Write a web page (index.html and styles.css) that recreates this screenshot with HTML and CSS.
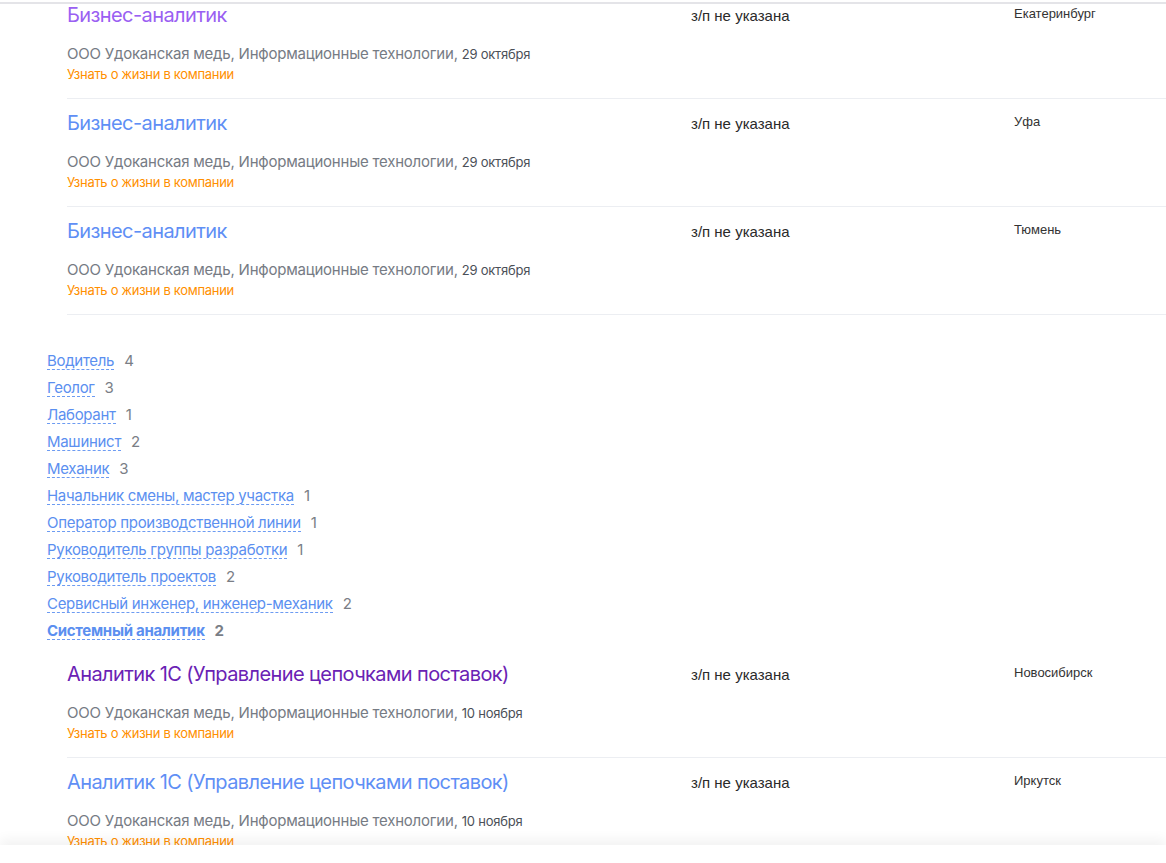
FILE: index.html
```html
<!DOCTYPE html>
<html lang="ru">
<head>
    <meta charset="UTF-8">
    <meta name="viewport" content="width=device-width, initial-scale=1.0">
    <title>Вакансии — ООО Удоканская медь</title>
    <link rel="stylesheet" href="styles.css">
</head>
<body>
    <div class="top-line"></div>

    <main class="page">
        <!-- Бизнес-аналитик -->
        <div class="vacancy-group">
            <div class="vacancy">
                <div class="vacancy-main">
                    <a href="#" class="vacancy-title visited">Бизнес-аналитик</a>
                    <div class="vacancy-company">ООО Удоканская медь, Информационные технологии, <span class="vacancy-date">29 октября</span></div>
                    <a href="#" class="vacancy-life">Узнать о жизни в компании</a>
                </div>
                <div class="vacancy-salary">з/п не указана</div>
                <div class="vacancy-city">Екатеринбург</div>
            </div>
            <div class="vacancy">
                <div class="vacancy-main">
                    <a href="#" class="vacancy-title">Бизнес-аналитик</a>
                    <div class="vacancy-company">ООО Удоканская медь, Информационные технологии, <span class="vacancy-date">29 октября</span></div>
                    <a href="#" class="vacancy-life">Узнать о жизни в компании</a>
                </div>
                <div class="vacancy-salary">з/п не указана</div>
                <div class="vacancy-city">Уфа</div>
            </div>
            <div class="vacancy">
                <div class="vacancy-main">
                    <a href="#" class="vacancy-title">Бизнес-аналитик</a>
                    <div class="vacancy-company">ООО Удоканская медь, Информационные технологии, <span class="vacancy-date">29 октября</span></div>
                    <a href="#" class="vacancy-life">Узнать о жизни в компании</a>
                </div>
                <div class="vacancy-salary">з/п не указана</div>
                <div class="vacancy-city">Тюмень</div>
            </div>
        </div>

        <!-- Профессии -->
        <ul class="professions">
            <li><a href="#" class="prof-link">Водитель</a><span class="prof-count">4</span></li>
            <li><a href="#" class="prof-link">Геолог</a><span class="prof-count">3</span></li>
            <li><a href="#" class="prof-link">Лаборант</a><span class="prof-count">1</span></li>
            <li><a href="#" class="prof-link">Машинист</a><span class="prof-count">2</span></li>
            <li><a href="#" class="prof-link">Механик</a><span class="prof-count">3</span></li>
            <li><a href="#" class="prof-link">Начальник смены, мастер участка</a><span class="prof-count">1</span></li>
            <li><a href="#" class="prof-link">Оператор производственной линии</a><span class="prof-count">1</span></li>
            <li><a href="#" class="prof-link">Руководитель группы разработки</a><span class="prof-count">1</span></li>
            <li><a href="#" class="prof-link">Руководитель проектов</a><span class="prof-count">2</span></li>
            <li><a href="#" class="prof-link">Сервисный инженер, инженер-механик</a><span class="prof-count">2</span></li>
            <li class="active"><a href="#" class="prof-link">Системный аналитик</a><span class="prof-count">2</span></li>
        </ul>

        <!-- Системный аналитик -->
        <div class="vacancy-group">
            <div class="vacancy">
                <div class="vacancy-main">
                    <a href="#" class="vacancy-title visited-dark">Аналитик 1С (Управление цепочками поставок)</a>
                    <div class="vacancy-company">ООО Удоканская медь, Информационные технологии, <span class="vacancy-date">10 ноября</span></div>
                    <a href="#" class="vacancy-life">Узнать о жизни в компании</a>
                </div>
                <div class="vacancy-salary">з/п не указана</div>
                <div class="vacancy-city">Новосибирск</div>
            </div>
            <div class="vacancy">
                <div class="vacancy-main">
                    <a href="#" class="vacancy-title">Аналитик 1С (Управление цепочками поставок)</a>
                    <div class="vacancy-company">ООО Удоканская медь, Информационные технологии, <span class="vacancy-date">10 ноября</span></div>
                    <a href="#" class="vacancy-life">Узнать о жизни в компании</a>
                </div>
                <div class="vacancy-salary">з/п не указана</div>
                <div class="vacancy-city">Иркутск</div>
            </div>
        </div>
    </main>

    <div class="bottom-bar"></div>
</body>
</html>
```

FILE: styles.css
```css
body {
    margin: 0;
    padding: 0;
    background-color: #fff;
    font-family: Inter, "Noto Sans", sans-serif;
    color: #222;
    overflow: hidden;
}
a {
    text-decoration: none;
}
.top-line {
    position: fixed;
    top: 0;
    left: 0;
    right: 0;
    height: 2px;
    background: #fff;
    border-bottom: 2px solid #e4e4e8;
    z-index: 5;
}
.page {
    margin-top: -9px;
    padding-left: 47px;
}
.vacancy-group {
    margin-left: 20px;
}
.vacancy {
    display: grid;
    grid-template-columns: 624px 323px 1fr;
    padding: 11px 0 14px;
    border-bottom: 1px solid #eceef2;
}
.vacancy-main {
    display: flex;
    flex-direction: column;
    align-items: flex-start;
}
.vacancy-title {
    font-size: 20px;
    line-height: 26px;
    color: #5f8ff5;
    letter-spacing: -0.6px;
}
.vacancy-title.visited {
    color: #9a60f2;
}
.vacancy-title.visited-dark {
    color: #6a22b4;
}
.vacancy-company {
    margin-top: 16px;
    font-size: 15px;
    line-height: 20px;
    color: #767b84;
    letter-spacing: -0.22px;
}
.vacancy-date {
    font-size: 13px;
    color: #4b5058;
}
.vacancy-life {
    font-size: 13px;
    line-height: 20px;
    color: #ff8f00;
    letter-spacing: -0.3px;
}
.vacancy-salary {
    padding-top: 1px;
    font-family: "Liberation Sans", Arial, sans-serif;
    font-size: 15px;
    line-height: 26px;
    color: #2a2a2a;
}
.vacancy-city {
    padding-top: 2px;
    font-family: "Liberation Sans", Arial, sans-serif;
    font-size: 13px;
    line-height: 20px;
    color: #333;
}
.professions {
    list-style: none;
    margin: 0;
    padding: 32px 0 6px;
}
.professions li {
    font-size: 15px;
    line-height: 27px;
}
.prof-link {
    display: inline-block;
    line-height: 16px;
    color: #5b8ff0;
    border-bottom: 1px dashed #6c9bf2;
    letter-spacing: -0.3px;
}
.prof-count {
    margin-left: 10px;
    color: #7a7e86;
}
.professions li.active {
    font-weight: 700;
}
.bottom-bar {
    position: fixed;
    left: 0;
    right: 0;
    bottom: 0;
    height: 18px;
    background: #fff;
    box-shadow: 0 -6px 12px rgba(0, 0, 0, 0.05);
}
```
